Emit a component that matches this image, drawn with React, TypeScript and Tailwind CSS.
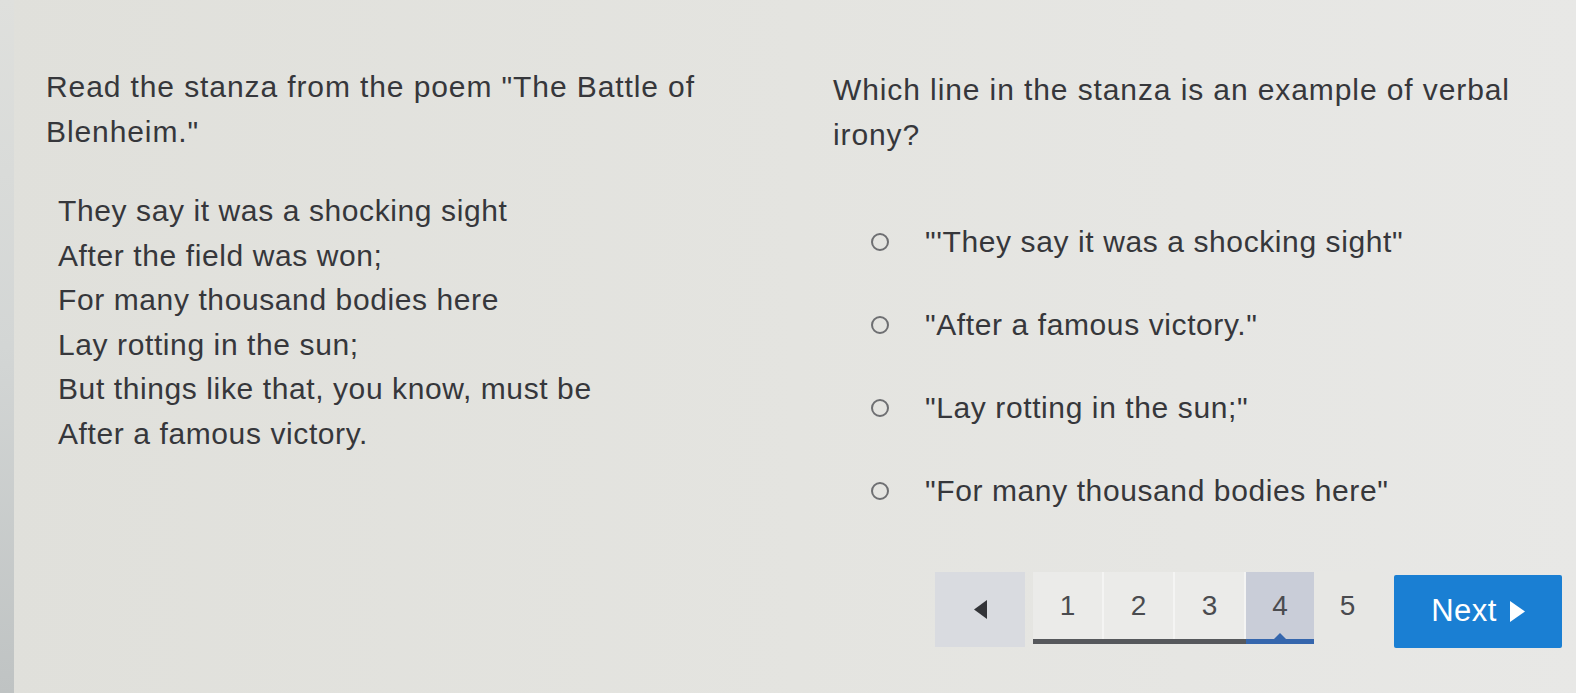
import React from "react";

const stanza = [
  "They say it was a shocking sight",
  "After the field was won;",
  "For many thousand bodies here",
  "Lay rotting in the sun;",
  "But things like that, you know, must be",
  "After a famous victory.",
];

const options = [
  "\"'They say it was a shocking sight\"",
  "\"After a famous victory.\"",
  "\"Lay rotting in the sun;\"",
  "\"For many thousand bodies here\"",
];

function Radio() {
  return <span className="block w-[18px] h-[18px] min-w-[18px] rounded-full border-2 border-[#6e6f72] shrink-0" />;
}

export default function App() {
  return (
    <div className="w-[1576px] h-[693px] flex overflow-hidden bg-gradient-to-r from-[#e0e0db] via-[#e4e4e0] to-[#e8e8e6] text-[#36373b] font-['Liberation_Sans',Arial,sans-serif]">
      <div className="w-[14px] h-full shrink-0 bg-gradient-to-b from-[#dfe0dd] via-[#d3d6d5] to-[#bfc3c3]" />
      <div className="w-[819px] shrink-0 pl-[32px] pt-[64px]">
        <p className="w-[700px] text-[30px] leading-[45px] tracking-[0.9px]">
          Read the stanza from the poem "The Battle of Blenheim."
        </p>
        <div className="mt-[35px] pl-[12px] text-[30px] leading-[44.5px] tracking-[0.6px]">
          {stanza.map((l) => (
            <div key={l}>{l}</div>
          ))}
        </div>
      </div>
      <div className="flex-1 pt-[67px]">
        <p className="w-[700px] text-[30px] leading-[45px] tracking-[0.9px]">
          Which line in the stanza is an example of verbal irony?
        </p>
        <div className="mt-[43px] pl-[38px]">
          {options.map((o) => (
            <div key={o} className="h-[83px] flex items-center gap-[36px]">
              <Radio />
              <span className="text-[30px] tracking-[0.6px]">{o}</span>
            </div>
          ))}
        </div>
        <div className="mt-[40px] ml-[102px] flex items-start">
          <div className="w-[90px] h-[75px] bg-[#d9dbe0] flex items-center justify-center">
            <svg width="13" height="19" viewBox="0 0 13 19">
              <polygon points="13,0 13,19 0,9.5" fill="#333438" />
            </svg>
          </div>
          <div className="ml-[8px] flex flex-col">
            <div className="flex h-[67px] text-[28px] text-[#4a4b4f]">
              {[1, 2, 3].map((n) => (
                <div key={n} className="w-[71px] h-full bg-[#ebebe9] border-r-[2px] border-[#f4f4f3] flex items-center justify-center">
                  {n}
                </div>
              ))}
              <div className="w-[68px] h-full bg-[#c9cdd8] flex items-center justify-center">4</div>
              <div className="w-[67px] h-full bg-[#e7e7e4] flex items-center justify-center">5</div>
            </div>
            <div className="flex h-[5px]">
              <div className="w-[213px] h-full bg-[#56585c]" />
              <div className="relative w-[68px] h-full bg-[#3566ad]">
                <span className="absolute left-1/2 -translate-x-1/2 -top-[6px] w-0 h-0 border-l-[6px] border-r-[6px] border-b-[6px] border-l-transparent border-r-transparent border-b-[#3566ad]" />
              </div>
            </div>
          </div>
          <div className="ml-[13px] mt-[3px] w-[168px] h-[73px] bg-[#1a7fd3] rounded-[2px] flex items-center justify-center gap-[13px] text-white text-[31px] tracking-[0.4px]">
            <span>Next</span>
            <svg width="15" height="21" viewBox="0 0 15 21">
              <polygon points="0,0 15,10.5 0,21" fill="#ffffff" />
            </svg>
          </div>
        </div>
      </div>
    </div>
  );
}
